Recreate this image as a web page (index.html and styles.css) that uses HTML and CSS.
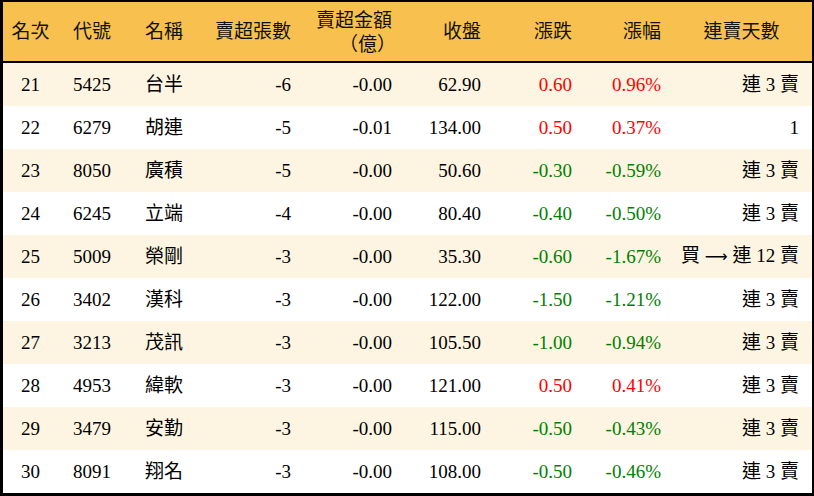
FILE: index.html
```html
<!DOCTYPE html>
<html lang="zh-Hant">
<head>
<meta charset="utf-8">
<title>賣超排行</title>
<link rel="stylesheet" href="styles.css">
</head>
<body>
<div class="board">
  <div class="row head">
    <div class="c">名次</div>
    <div class="c">代號</div>
    <div class="c">名稱</div>
    <div class="c">賣超張數</div>
    <div class="c two"><span>賣超金額</span><span class="paren">（億）</span></div>
    <div class="c">收盤</div>
    <div class="c">漲跌</div>
    <div class="c">漲幅</div>
    <div class="c">連賣天數</div>
  </div>
  <div class="row odd">
    <div class="c">21</div><div class="c">5425</div><div class="c">台半</div><div class="c">-6</div><div class="c">-0.00</div><div class="c">62.90</div><div class="c up">0.60</div><div class="c up">0.96%</div><div class="c">連 3 賣</div>
  </div>
  <div class="row">
    <div class="c">22</div><div class="c">6279</div><div class="c">胡連</div><div class="c">-5</div><div class="c">-0.01</div><div class="c">134.00</div><div class="c up">0.50</div><div class="c up">0.37%</div><div class="c">1</div>
  </div>
  <div class="row odd">
    <div class="c">23</div><div class="c">8050</div><div class="c">廣積</div><div class="c">-5</div><div class="c">-0.00</div><div class="c">50.60</div><div class="c dn">-0.30</div><div class="c dn">-0.59%</div><div class="c">連 3 賣</div>
  </div>
  <div class="row">
    <div class="c">24</div><div class="c">6245</div><div class="c">立端</div><div class="c">-4</div><div class="c">-0.00</div><div class="c">80.40</div><div class="c dn">-0.40</div><div class="c dn">-0.50%</div><div class="c">連 3 賣</div>
  </div>
  <div class="row odd">
    <div class="c">25</div><div class="c">5009</div><div class="c">榮剛</div><div class="c">-3</div><div class="c">-0.00</div><div class="c">35.30</div><div class="c dn">-0.60</div><div class="c dn">-1.67%</div><div class="c">買 <span class="arw">⟶</span> 連 12 賣</div>
  </div>
  <div class="row">
    <div class="c">26</div><div class="c">3402</div><div class="c">漢科</div><div class="c">-3</div><div class="c">-0.00</div><div class="c">122.00</div><div class="c dn">-1.50</div><div class="c dn">-1.21%</div><div class="c">連 3 賣</div>
  </div>
  <div class="row odd">
    <div class="c">27</div><div class="c">3213</div><div class="c">茂訊</div><div class="c">-3</div><div class="c">-0.00</div><div class="c">105.50</div><div class="c dn">-1.00</div><div class="c dn">-0.94%</div><div class="c">連 3 賣</div>
  </div>
  <div class="row">
    <div class="c">28</div><div class="c">4953</div><div class="c">緯軟</div><div class="c">-3</div><div class="c">-0.00</div><div class="c">121.00</div><div class="c up">0.50</div><div class="c up">0.41%</div><div class="c">連 3 賣</div>
  </div>
  <div class="row odd">
    <div class="c">29</div><div class="c">3479</div><div class="c">安勤</div><div class="c">-3</div><div class="c">-0.00</div><div class="c">115.00</div><div class="c dn">-0.50</div><div class="c dn">-0.43%</div><div class="c">連 3 賣</div>
  </div>
  <div class="row">
    <div class="c">30</div><div class="c">8091</div><div class="c">翔名</div><div class="c">-3</div><div class="c">-0.00</div><div class="c">108.00</div><div class="c dn">-0.50</div><div class="c dn">-0.46%</div><div class="c">連 3 賣</div>
  </div>
</div>
</body>
</html>
```

FILE: styles.css
```css
html, body {
  margin: 0;
  padding: 0;
  background: #ffffff;
}

.board {
  width: 814px;
  height: 496px;
  box-sizing: border-box;
  border-style: solid;
  border-color: #000000;
  border-width: 2px 2px 3px 3px;
  font-family: "Liberation Serif", "Noto Sans CJK TC", serif;
  font-size: 19px;
  color: #000000;
  overflow: hidden;
}

.row {
  display: grid;
  grid-template-columns: 55px 72px 71px 100px 101px 89px 91px 89px 141px;
  height: 43px;
  align-items: center;
  background: #ffffff;
}

.row.odd {
  background: #fdf5e1;
}

.row.head {
  height: 59px;
  background: #f8c14f;
  border-bottom: 2px solid #000000;
  color: #111111;
}

.c {
  white-space: nowrap;
  line-height: 22px;
}

.c:nth-child(1) {
  text-align: center;
}

.c:nth-child(2),
.c:nth-child(3) {
  padding-left: 15px;
}

.c:nth-child(4),
.c:nth-child(5),
.c:nth-child(6),
.c:nth-child(7),
.c:nth-child(8) {
  text-align: right;
  padding-right: 10px;
}

.c:nth-child(9) {
  text-align: right;
  padding-right: 13px;
}

.head .c:nth-child(9) {
  text-align: center;
  padding-right: 0;
}

.two {
  display: flex;
  flex-direction: column;
  align-items: flex-end;
}

.paren {
  font-family: "Noto Sans CJK TC", sans-serif;
  margin-right: -4px;
}

.arw {
  font-family: "DejaVu Sans", sans-serif;
  font-size: 16px;
}

.up {
  color: #ff0000;
}

.dn {
  color: #008000;
}
```
